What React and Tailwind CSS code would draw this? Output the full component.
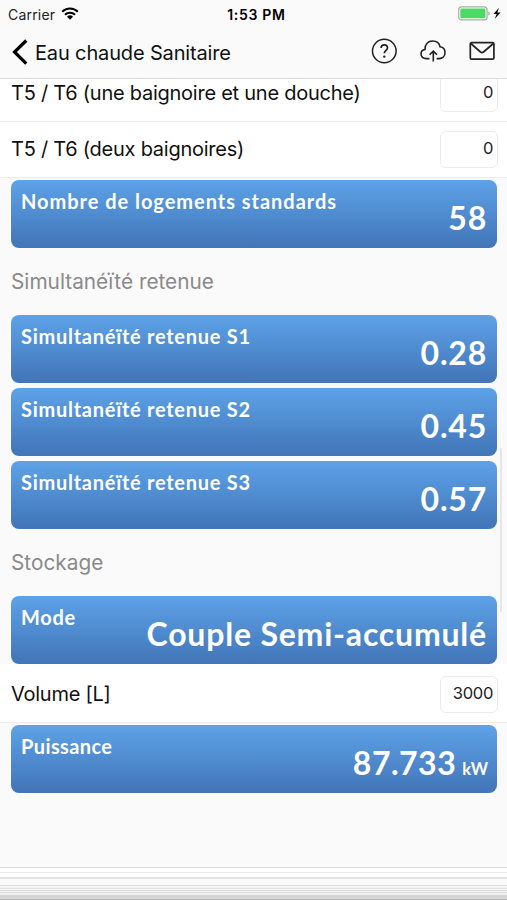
/**
 * ResultCard - Blue gradient panel with a computed value
 */
function ResultCard({
  label,
  value,
  unit,
  labelClass = 'tracking-[0.73px]',
  valueClass = 'tracking-[0.8px]',
}) {
  return (
    <div className="mr-[10px] ml-[11px] h-[68px] shrink-0 rounded-lg bg-linear-to-b from-[#5ea2e8] to-[#4175b7] px-[10px] font-[Lato,sans-serif] font-bold text-white">
      <div className={`h-[19px] pt-[9px] text-[20px] leading-6 whitespace-nowrap ${labelClass}`}>
        {label}
      </div>
      <div className="flex items-baseline justify-end whitespace-nowrap">
        <span className={`text-[32px] leading-[38px] ${valueClass}`}>{value}</span>
        {unit && <span className="-mr-px ml-[6px] text-[16.5px] leading-none">{unit}</span>}
      </div>
    </div>
  );
}

/**
 * InputRow - White row with a label and a numeric field
 */
function InputRow({ label, value }) {
  return (
    <div className="flex h-14 shrink-0 items-center justify-between border-b border-[#ebebeb] bg-white pr-[9px] pl-[11px] text-[#111]">
      <span className="pb-[2px] text-[20px] leading-6 tracking-[-0.25px] whitespace-nowrap">
        {label}
      </span>
      <div className="flex h-[37px] w-[58px] items-center justify-end rounded-md border border-[#ebebeb] pr-[4px] pb-[2px] text-[16.5px] tracking-[-0.3px] text-[#222]">
        {value}
      </div>
    </div>
  );
}

function SectionTitle({ children }) {
  return (
    <div className="flex h-[67px] shrink-0 items-center pl-[11px] text-[20.8px] text-[#8a8a8a]">
      {children}
    </div>
  );
}

function StatusBar() {
  return (
    <div className="grid h-[27px] grid-cols-3 items-center pr-[5px] pl-[8px] text-[14px] text-[#222]">
      <div className="flex items-center gap-[6px]">
        <span className="pt-px tracking-[0.2px]">Carrier</span>
        <svg width="18" height="13" viewBox="0 0 18 13" aria-hidden="true">
          <g fill="none" stroke="#000" strokeWidth="2.1">
            <path d="M1.2 4.8a11 11 0 0 1 15.6 0" />
            <path d="M4 7.8a7 7 0 0 1 10 0" />
          </g>
          <path d="M6 9.7a4.3 4.3 0 0 1 6 0l-3 3z" fill="#000" />
        </svg>
      </div>
      <span className="pt-px pl-[3px] text-center font-semibold tracking-[0.7px] whitespace-nowrap text-black">
        1:53 PM
      </span>
      <div className="flex items-center justify-end">
        <svg width="44" height="15" viewBox="0 0 44 15" aria-hidden="true">
          <rect x="0.7" y="0.9" width="28.4" height="13" rx="3" fill="#fff" stroke="#aaa" strokeWidth="1.2" />
          <rect x="2.3" y="2.5" width="25.2" height="9.8" rx="1.2" fill="#4cd964" />
          <path d="M30.3 5.4c2 .4 2 3.6 0 4z" fill="#aaa" />
          <path d="M41 1.8l-5.5 6.2h3.2l-2 5 5.8-6.4h-3.2z" fill="#000" />
        </svg>
      </div>
    </div>
  );
}

function NavBar() {
  return (
    <div className="flex h-[51px] items-center pr-[12px] pl-[11px]">
      <svg width="18" height="28" viewBox="0 0 18 28" fill="none" stroke="#000" strokeWidth="3.2" className="mb-[2px]" aria-hidden="true">
        <path d="M15.3 2.5L3.5 14l11.8 11.7" />
      </svg>
      <h1 className="ml-[6px] text-[20px] tracking-[-0.15px] whitespace-nowrap text-[#111]">
        Eau chaude Sanitaire
      </h1>
      <div className="mb-[4px] ml-auto flex items-center gap-[23px]">
        <svg width="26" height="26" viewBox="0 0 26 26" fill="none" stroke="#222" strokeWidth="1.5" aria-hidden="true">
          <circle cx="13.3" cy="13" r="11.8" />
          <path d="M10.1 10.1c0-2 1.3-3.3 3.2-3.3s3.2 1.2 3.2 3c0 2.6-3.2 2.6-3.2 5.500" strokeWidth="1.7" />
          <circle cx="13.3" cy="18.6" r="1.2" fill="#222" stroke="none" />
        </svg>
        <svg width="26" height="24" viewBox="0 0 26 24" fill="none" stroke="#222" strokeWidth="1.6" aria-hidden="true">
          <path d="M9.400 19.600H6.200C3.200 19.600 1 17.700 1 15c0-2.400 1.600-4.200 4-4.500C4.700 5 8.300 2 12.600 2c3.800 0 6.700 2.200 7.400 5.700 3 .4 5 2.900 5 5.900 0 3.500-2.400 6-5.900 6h-2.500" />
          <path d="M13.300 22.500v-10M9.600 15.800l3.700-3.700 3.700 3.700" />
        </svg>
        <svg width="26" height="20" viewBox="0 0 26 20" fill="none" stroke="#222" strokeWidth="1.7" aria-hidden="true">
          <rect x="1.3" y="1.7" width="23.6" height="16.4" rx="1.2" />
          <path d="M1.800 2.500l9.700 8.500q1.500 1.200 3 0l9.900-8.500" />
        </svg>
      </div>
    </div>
  );
}

/**
 * PanelEdges - Stack of collapsed panels along the bottom edge
 */
function PanelEdges() {
  return (
    <div className="mt-auto shrink-0">
      <div className="h-[5px] border-t border-[#dedede] bg-white" />
      <div className="h-[5px] border-t border-[#ebebeb] bg-white" />
      <div className="h-[8px] border-t-2 border-[#e4e4e4] bg-[#fafafa]" />
      <div className="h-[3px] border-t border-[#e0e0e0] bg-[#f5f5f5]" />
      <div className="h-[2px] border-t border-[#e2e2e2] bg-[#f8f8f8]" />
      <div className="h-[2px] border-t border-[#dadada] bg-[#f4f4f4]" />
      <div className="h-[3px] border-t border-[#e0e0e0] bg-[#eeeeee]" />
      <div className="h-[2px] bg-[#d4d4d4]" />
      <div className="h-[2px] bg-[#d8d8d8]" />
      <div className="h-[1px] bg-[#b6b6b6]" />
    </div>
  );
}

export default function App() {
  return (
    <div className="relative flex h-[900px] w-[507px] flex-col overflow-hidden bg-[#fafafa] font-[Inter,sans-serif]">
      <header className="z-10 h-[79px] shrink-0 border-b border-[#dcdcdc] bg-[#fafafa]">
        <StatusBar />
        <NavBar />
      </header>

      <main className="-mt-[13px] flex flex-col">
        <InputRow label="T5 / T6 (une baignoire et une douche)" value="0" />
        <InputRow label="T5 / T6 (deux baignoires)" value="0" />
        <div className="h-[2px]" />
        <ResultCard label="Nombre de logements standards" value="58" labelClass="tracking-[0.97px]" />
        <SectionTitle>Simultanéïté retenue</SectionTitle>
        <div className="flex flex-col gap-[5px]">
          <ResultCard label="Simultanéïté retenue S1" value="0.28" />
          <ResultCard label="Simultanéïté retenue S2" value="0.45" />
          <ResultCard label="Simultanéïté retenue S3" value="0.57" />
        </div>
        <SectionTitle>Stockage</SectionTitle>
        <ResultCard label="Mode" value="Couple Semi-accumulé" />
        <div className="bg-white pt-[3px]">
          <InputRow label="Volume [L]" value="3000" />
        </div>
        <div className="h-[2px]" />
        <ResultCard
          label="Puissance"
          value="87.733"
          unit="kW"
          labelClass="tracking-[0.4px]"
          valueClass="tracking-[0.5px]"
        />
      </main>

      <PanelEdges />
      <div className="absolute top-[448px] right-[5px] h-[164px] w-[2px] rounded-full bg-[#e6e6e6]" />
    </div>
  );
}
